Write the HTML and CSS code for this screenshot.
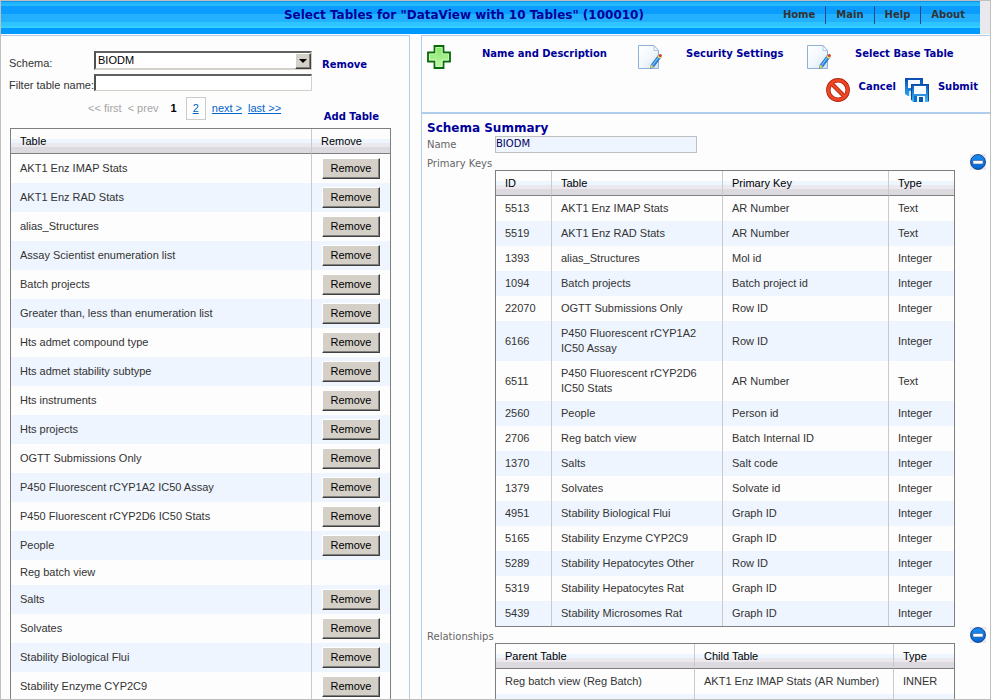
FILE: index.html
```html
<!DOCTYPE html>
<html lang="en">
<head>
<meta charset="utf-8">
<title>Select Tables</title>
<link rel="stylesheet" href="styles.css">
</head>
<body>
<svg class="defs" aria-hidden="true">
  <defs>
    <linearGradient id="plusFill" x1="0" y1="0" x2="0" y2="1"><stop offset="0" stop-color="#7de35f"/><stop offset="1" stop-color="#c5f9ae"/></linearGradient>
    <linearGradient id="pageFill" x1="0" y1="0" x2="1" y2="1"><stop offset="0" stop-color="#fff"/><stop offset=".5" stop-color="#f3f8fd"/><stop offset="1" stop-color="#cfe2f5"/></linearGradient>
    <linearGradient id="diskBack" x1="0" y1="0" x2="0" y2="1"><stop offset="0" stop-color="#0a4bb0"/><stop offset="1" stop-color="#2ba6ee"/></linearGradient>
    <linearGradient id="diskFill" x1="0" y1="0" x2="0" y2="1"><stop offset="0" stop-color="#0a56b4"/><stop offset="1" stop-color="#45b8f8"/></linearGradient>
    <linearGradient id="minusFill" x1="0" y1="0" x2="0" y2="1"><stop offset="0" stop-color="#1c8cf4"/><stop offset="1" stop-color="#0566cf"/></linearGradient>
    <symbol id="i-edit" viewBox="0 0 24 24">
      <path d="M.5.5H16l4.500 5V23.500H.5z" fill="url(#pageFill)" stroke="#8fb0d8"/>
      <path d="M16 .8V5.500h4.500z" fill="#fff" stroke="#9db9dc" stroke-width=".8"/>
      <path d="M13 20l7.500-10 2.700 2-7.400 10-3.300 1.200z" fill="#2c86da" stroke="#1c5fae" stroke-width=".6"/>
      <path d="M14.500 20.300l6-8" stroke="#8fd0ff"/>
      <path d="M12.500 23.200l.5-3.400 2.900 2.200z" fill="#f4d83c"/>
      <path d="M19.300 11.700l1.300-1.800 2.700 2-1.300 1.800z" fill="#ffe04a"/>
      <circle cx="22.300" cy="10.500" r="1.600" fill="#d04228"/>
    </symbol>
    <symbol id="i-minus" viewBox="0 0 16 16">
      <path d="M0 0h16v16H0z" fill="#ebe9ee"/>
      <circle cx="8" cy="8" r="7.400" fill="url(#minusFill)" stroke="#123f8c"/>
      <path d="M3 6.500h10v3.500H3z" fill="#fff" stroke="#3a5f96" stroke-width=".6"/>
    </symbol>
  </defs>
</svg>
<div class="frame">
  <header class="banner">
    <h1>Select Tables for "DataView with 10 Tables" (100010)</h1>
    <nav class="menu">
      <a href="#">Home</a><a href="#">Main</a><a href="#">Help</a><a href="#">About</a>
    </nav>
  </header>

  <div class="panels">
    <section class="panel panel-tables">
      <form class="filter">
        <label for="schema">Schema:</label>
        <div class="select">
          <select id="schema"><option>BIODM</option></select>
          <span class="select-arrow"></span>
        </div>
        <a class="action" href="#">Remove</a>
        <label for="filter">Filter table name:</label>
        <input id="filter" type="text">
      </form>
      <div class="paging">
        <div class="pager">
          <span>&lt;&lt; first</span><span>&lt; prev</span><b>1</b><a class="page" href="#">2</a><a href="#">next &gt;</a><a href="#">last &gt;&gt;</a>
        </div>
        <a class="action" href="#">Add Table</a>
      </div>
      <table class="grid">
        <colgroup><col><col class="c-remove"></colgroup>
        <thead><tr><th>Table</th><th>Remove</th></tr></thead>
        <tbody>
          <tr><td>AKT1 Enz IMAP Stats</td><td><button type="button">Remove</button></td></tr>
          <tr><td>AKT1 Enz RAD Stats</td><td><button type="button">Remove</button></td></tr>
          <tr><td>alias_Structures</td><td><button type="button">Remove</button></td></tr>
          <tr><td>Assay Scientist enumeration list</td><td><button type="button">Remove</button></td></tr>
          <tr><td>Batch projects</td><td><button type="button">Remove</button></td></tr>
          <tr><td>Greater than, less than enumeration list</td><td><button type="button">Remove</button></td></tr>
          <tr><td>Hts admet compound type</td><td><button type="button">Remove</button></td></tr>
          <tr><td>Hts admet stability subtype</td><td><button type="button">Remove</button></td></tr>
          <tr><td>Hts instruments</td><td><button type="button">Remove</button></td></tr>
          <tr><td>Hts projects</td><td><button type="button">Remove</button></td></tr>
          <tr><td>OGTT Submissions Only</td><td><button type="button">Remove</button></td></tr>
          <tr><td>P450 Fluorescent rCYP1A2 IC50 Assay</td><td><button type="button">Remove</button></td></tr>
          <tr><td>P450 Fluorescent rCYP2D6 IC50 Stats</td><td><button type="button">Remove</button></td></tr>
          <tr><td>People</td><td><button type="button">Remove</button></td></tr>
          <tr><td>Reg batch view</td><td></td></tr>
          <tr><td>Salts</td><td><button type="button">Remove</button></td></tr>
          <tr><td>Solvates</td><td><button type="button">Remove</button></td></tr>
          <tr><td>Stability Biological Flui</td><td><button type="button">Remove</button></td></tr>
          <tr><td>Stability Enzyme CYP2C9</td><td><button type="button">Remove</button></td></tr>
        </tbody>
      </table>
    </section>

    <section class="panel panel-summary">
      <div class="toolbar">
        <div class="tools">
          <a class="tool wide" href="#"><svg class="icon" viewBox="0 0 24 24"><path d="M7.500 1h9v6.500H23v9h-6.500V23h-9v-6.500H1v-9h6.500z" fill="url(#plusFill)" stroke="#086a08" stroke-width="1.800"/><path d="M9 2.500h6V9h6.500v6H15v6.500H9V15H2.500V9H9z" fill="none" stroke="#d5fac6" stroke-width=".8"/></svg>Name and Description</a>
          <a class="tool" href="#"><svg class="icon"><use href="#i-edit"/></svg>Security Settings</a>
          <a class="tool" href="#"><svg class="icon"><use href="#i-edit"/></svg>Select Base Table</a>
        </div>
        <div class="tools tools-end">
          <a class="tool" href="#"><svg class="icon" viewBox="0 0 24 24"><circle cx="12" cy="12" r="9.700" fill="#fff" stroke="#a82410" stroke-width="4.400"/><path d="M5.500 5.500l13 13" stroke="#a82410" stroke-width="4.200"/><circle cx="12" cy="12" r="9.700" fill="none" stroke="#f04424" stroke-width="2.800"/><path d="M5 5l14 14" stroke="#f04424" stroke-width="2.600"/></svg>Cancel</a>
          <a class="tool" href="#"><svg class="icon" viewBox="0 0 24 24"><path d="M0 0h18v18H3l-3-2z" fill="url(#diskBack)"/><path d="M3 2h12v8H3z" fill="#f6fbff"/><path d="M4 13h3v5H4z" fill="#cfe8ff"/><path d="M6 6h18v18H8l-2-2z" fill="url(#diskFill)"/><path d="M6.500 22V6.500h17V23" fill="none" stroke="#0b4aa4"/><path d="M9 8h12v8H9z" fill="#f8fcff"/><path d="M9 18h3v6H9z" fill="#0d6fd0"/><path d="M12 18h8v6h-8z" fill="#f2f9ff"/><path d="M14 19h4v5h-4z" fill="#0b55ae"/></svg>Submit</a>
        </div>
      </div>

      <div class="summary">
        <h2>Schema Summary</h2>
        <div class="field">
          <label for="name">Name</label>
          <input id="name" type="text" value="BIODM" readonly>
        </div>
        <div class="field">
          <span class="label">Primary Keys</span>
          <table class="grid keys">
            <colgroup><col class="c-id"><col class="c-table"><col><col class="c-type"></colgroup>
            <thead><tr><th>ID</th><th>Table</th><th>Primary Key</th><th>Type</th></tr></thead>
            <tbody>
              <tr><td>5513</td><td>AKT1 Enz IMAP Stats</td><td>AR Number</td><td>Text</td></tr>
              <tr><td>5519</td><td>AKT1 Enz RAD Stats</td><td>AR Number</td><td>Text</td></tr>
              <tr><td>1393</td><td>alias_Structures</td><td>Mol id</td><td>Integer</td></tr>
              <tr><td>1094</td><td>Batch projects</td><td>Batch project id</td><td>Integer</td></tr>
              <tr><td>22070</td><td>OGTT Submissions Only</td><td>Row ID</td><td>Integer</td></tr>
              <tr><td>6166</td><td>P450 Fluorescent rCYP1A2 IC50 Assay</td><td>Row ID</td><td>Integer</td></tr>
              <tr><td>6511</td><td>P450 Fluorescent rCYP2D6 IC50 Stats</td><td>AR Number</td><td>Text</td></tr>
              <tr><td>2560</td><td>People</td><td>Person id</td><td>Integer</td></tr>
              <tr><td>2706</td><td>Reg batch view</td><td>Batch Internal ID</td><td>Integer</td></tr>
              <tr><td>1370</td><td>Salts</td><td>Salt code</td><td>Integer</td></tr>
              <tr><td>1379</td><td>Solvates</td><td>Solvate id</td><td>Integer</td></tr>
              <tr><td>4951</td><td>Stability Biological Flui</td><td>Graph ID</td><td>Integer</td></tr>
              <tr><td>5165</td><td>Stability Enzyme CYP2C9</td><td>Graph ID</td><td>Integer</td></tr>
              <tr><td>5289</td><td>Stability Hepatocytes Other</td><td>Row ID</td><td>Integer</td></tr>
              <tr><td>5319</td><td>Stability Hepatocytes Rat</td><td>Graph ID</td><td>Integer</td></tr>
              <tr><td>5439</td><td>Stability Microsomes Rat</td><td>Graph ID</td><td>Integer</td></tr>
            </tbody>
          </table>
          <button class="collapse" type="button" aria-label="Collapse"><svg><use href="#i-minus"/></svg></button>
        </div>
        <div class="field">
          <span class="label">Relationships</span>
          <table class="grid keys">
            <colgroup><col class="c-parent"><col><col class="c-join"></colgroup>
            <thead><tr><th>Parent Table</th><th>Child Table</th><th>Type</th></tr></thead>
            <tbody>
              <tr><td>Reg batch view (Reg Batch)</td><td>AKT1 Enz IMAP Stats (AR Number)</td><td>INNER</td></tr>
              <tr><td>&nbsp;</td><td></td><td></td></tr>
            </tbody>
          </table>
          <button class="collapse" type="button" aria-label="Collapse"><svg><use href="#i-minus"/></svg></button>
        </div>
      </div>
    </section>
  </div>
</div>
</body>
</html>
```
FILE: styles.css
```css
* { box-sizing: border-box; }

body {
  margin: 0;
  font: 11px/15px "Liberation Sans", Arial, sans-serif;
  color: #333;
  background: #fdfdfd;
}

a { text-decoration: none; }
.defs { position: absolute; width: 0; height: 0; }

.frame {
  position: relative;
  height: 100vh;
  display: flex;
  flex-direction: column;
  overflow: hidden;
  border: 1px solid #bfbfbf;
}

/* Banner */
.banner {
  display: flex;
  flex: none;
  align-items: flex-start;
  height: 33px;
  margin-bottom: 1px;
  padding: 5px 0 0 154px;
  border-right: 10px solid #e9e8ec;
  background: linear-gradient(#0d93ea 0 1px, #1fb4ff 1px 3px, #2ab9ff 3px 5px, #0a9dff 5px 13px, #22b0ff 13px 21px, #2ec4ff 21px 25px, #35cfff 25px 27px, #0099ff 27px);
}

.banner h1 {
  flex: 1;
  margin: 0;
  text-align: center;
  white-space: nowrap;
  font: bold 12px/18px "DejaVu Sans", Verdana, sans-serif;
  color: #000099;
}

.menu { display: flex; }

.menu a {
  padding: 0 10px;
  font: bold 10px/18px "DejaVu Sans", Tahoma, sans-serif;
  color: #333;
}

.menu a + a { border-left: 1px solid #1c4f80; }
.menu a:last-child { padding-right: 15px; }

/* Panels */
.panels {
  flex: 1;
  min-height: 0;
  display: grid;
  grid-template-columns: 409px minmax(0, 1fr);
  gap: 11px;
}

.panel {
  min-height: 0;
  overflow: hidden;
  border-top: 1px solid #b0cdeb;
}

.panel-tables {
  padding: 15px 18px 0 9px;
  border-right: 1px solid #b0cdeb;
}

.panel-summary { border-left: 1px solid #b0cdeb; }

.action, .tool {
  font: bold 10px/17px "DejaVu Sans", Verdana, sans-serif;
  color: #000099;
}

/* Filter form */
.filter {
  display: grid;
  grid-template-columns: 84px 218px 1fr;
  grid-template-rows: 19px 17px;
  row-gap: 4px;
  align-items: center;
}

.filter label {
  padding-top: 6px;
  margin-left: -1px;
  white-space: nowrap;
}

.filter .action { padding: 8px 0 0 10px; }

.select { position: relative; height: 19px; }

select, input {
  width: 100%;
  font: 11px/13px "Liberation Sans", Arial, sans-serif;
  color: #000;
  border-radius: 0;
  outline: 0;
}

select {
  height: 19px;
  padding: 0 2px;
  appearance: none;
  background: #fff;
  border: 2px solid;
  border-color: #606060 #d4d0c8 #d4d0c8 #505050;
}

.select-arrow {
  position: absolute;
  top: 2px;
  right: 1px;
  width: 16px;
  height: 16px;
  background: #d4d0c8;
  border: 1px solid;
  border-color: #fff #404040 #404040 #fff;
  box-shadow: inset -1px -1px #808080;
  pointer-events: none;
}

.select-arrow::after {
  content: "";
  position: absolute;
  top: 5px;
  left: 3px;
  border: 4px solid transparent;
  border-top-color: #000;
  border-bottom: 0;
}

#filter {
  height: 17px;
  padding: 0 2px;
  background: #fff;
  border: 2px solid;
  border-width: 2px 1px 1px 2px;
  border-color: #606060 #d4d0c8 #d4d0c8 #505050;
}

/* Pager */
.paging {
  display: flex;
  justify-content: space-between;
  align-items: flex-end;
  height: 37px;
  padding: 0 12px 3px 78px;
}

.pager {
  display: flex;
  align-items: center;
  align-self: flex-start;
  gap: 6px;
  padding-top: 6px;
  color: #a6a6a6;
}

.pager b { padding: 0 3px 0 6px; color: #000; }
.pager a { color: #0066cc; text-decoration: underline; }
.pager .page { padding: 3px 6px; border: 1px solid #cbcbcb; }

/* Data grids */
.grid {
  width: 100%;
  table-layout: fixed;
  border: 1px solid #7f7f7f;
  border-spacing: 0;
}

.grid th {
  height: 25px;
  padding: 0 9px;
  text-align: left;
  font-weight: normal;
  color: #000;
  border-bottom: 1px solid #7f7f7f;
  background: linear-gradient(#fdfdfd 0 10px, #edf5fe 10px 14px, #ebe9ee 14px 18px, #dcdadf 18px);
}

.grid td { padding: 5px 9px; }
.grid td:has(button) { padding: 4px 10px; }
.grid th + th, .grid td + td { border-left: 1px solid #c9c9ce; }
.grid tbody tr:nth-child(even) { background: #eef5fe; }

.grid td button {
  display: block;
  width: 58px;
  height: 21px;
  padding: 0;
  font: 11px/15px "Liberation Sans", Arial, sans-serif;
  color: #000;
  background: #d4d0c8;
  border: 1px solid;
  border-color: #fff #404040 #404040 #fff;
  box-shadow: inset -1px -1px #808080;
}

.c-remove { width: 79px; }
.c-id { width: 55px; }
.c-table { width: 171px; }
.c-type { width: 66px; }
.c-parent { width: 198px; }
.c-join { width: 61px; }

/* Toolbar */
.toolbar {
  display: grid;
  gap: 9px;
  padding: 9px 12px 10px 5px;
  border-bottom: 2px solid #b0cdeb;
}

.tools {
  display: grid;
  grid-template-columns: 211fr 169fr 147fr;
  padding-right: 24px;
}

.tools-end {
  display: flex;
  justify-content: flex-end;
  gap: 9px;
  padding-right: 0;
}

.tool { display: flex; gap: 24px; white-space: nowrap; }
.tool.wide { gap: 31px; }
.tools-end .tool { gap: 9px; }
.icon { flex: none; width: 24px; height: 24px; }

/* Summary */
.summary { padding: 6px 4px 0 5px; }

.summary h2 {
  margin: 0;
  font: bold 12px/16px "DejaVu Sans", Verdana, sans-serif;
  color: #000099;
}

.field {
  display: grid;
  grid-template-columns: 68px minmax(0, 1fr) 16px;
  align-items: start;
}

.field label, .label {
  font: 10px/15px "DejaVu Sans", Verdana, sans-serif;
  color: #666;
}

.field label { padding-top: 1px; }
.label { margin-top: 3px; white-space: nowrap; }

#name {
  width: 202px;
  height: 17px;
  padding: 0 0 2px;
  font: 10px/13px "DejaVu Sans", Verdana, sans-serif;
  color: #000066;
  background: #eef5fe;
  border: 1px solid #bfbfbf;
}

.keys { width: auto; margin: 17px 15px 0 0; }
.field:last-child .label { margin-top: 2px; }
.field:last-child .keys { margin-top: 16px; }

.collapse {
  width: 16px;
  height: 16px;
  margin-top: 1px;
  padding: 0;
  border: 0;
  background: none;
}

.field:last-child .collapse { margin-top: 0; }
.collapse svg { display: block; width: 16px; height: 16px; }
```
